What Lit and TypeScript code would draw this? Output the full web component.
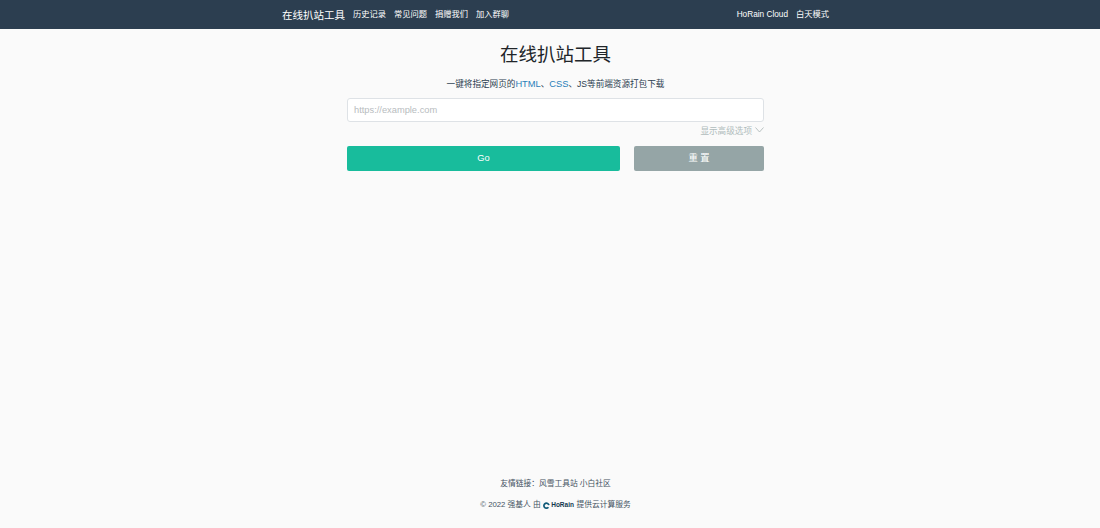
import { LitElement, html, css } from "lit";
import { customElement } from "lit/decorators.js";

@customElement("app-root")
export class AppRoot extends LitElement {
  static styles = css`
    :host {
      display: flex;
      flex-direction: column;
      height: 528px;
      overflow: hidden;
      background: #fafafa;
      color: #2c3e50;
      font-family: "Liberation Sans", "Noto Sans CJK SC", sans-serif;
      font-size: 8.6px;
    }
    a { color: inherit; text-decoration: none; }
    .nav {
      flex: none;
      height: 29px;
      background: #2c3e50;
      box-sizing: border-box;
      padding: 0 271px 0 282px;
      display: flex;
      align-items: center;
      color: #fff;
      font-size: 8.25px;
      line-height: 12px;
    }
    .brand { font-size: 10.5px; margin-right: 8px; }
    .links { display: flex; gap: 8px; flex: 1; }
    .right { display: flex; gap: 8px; }
    main {
      flex: 1;
      box-sizing: border-box;
      padding: 0 336px 0 347px;
    }
    h1 {
      margin: 12px 0 0;
      height: 28px;
      line-height: 28px;
      font-size: 18.5px;
      font-weight: 400;
      text-align: center;
      color: #212529;
    }
    .lead {
      margin: 8px 0 0;
      height: 14px;
      line-height: 14px;
      text-align: center;
    }
    .lead a { color: #2980b9; font-size: 9.3px; }
    .input {
      margin-top: 7px;
      box-sizing: border-box;
      height: 24px;
      line-height: 22px;
      padding: 0 6px;
      background: #fff;
      border: 1px solid #dee2e6;
      border-radius: 3px;
      color: #b8bcc0;
      font-size: 9.3px;
    }
    .adv {
      margin-top: 1px;
      height: 13px;
      display: flex;
      justify-content: flex-end;
      align-items: center;
      gap: 3px;
      color: #b0bcbc;
    }
    .adv svg { display: block; }
    .btns {
      display: grid;
      grid-template-columns: 273px 130px;
      justify-content: space-between;
      margin-top: 10px;
    }
    .btn {
      height: 25px;
      line-height: 25px;
      text-align: center;
      color: #fff;
      border-radius: 2px;
      font-size: 9.3px;
    }
    .go { background: #18bc9c; }
    .reset { background: #95a5a6; }
    footer {
      flex: none;
      height: 50px;
      padding-left: 11px;
      text-align: center;
      font-size: 7.75px;
      color: #44525f;
    }
    footer p { margin: 0; height: 12px; line-height: 12px; }
    footer p + p {
      margin-top: 9px;
      display: flex;
      justify-content: center;
      align-items: center;
      gap: 2.5px;
    }
    .logo {
      display: inline-flex;
      align-items: center;
      gap: 1px;
      font-size: 6.5px;
      font-weight: 700;
      color: #12384f;
    }
  `;

  render() {
    return html`
      <div class="nav">
        <a class="brand">在线扒站工具</a>
        <div class="links">
          <a>历史记录</a><a>常见问题</a><a>捐赠我们</a><a>加入群聊</a>
        </div>
        <div class="right"><a>HoRain Cloud</a><a>白天模式</a></div>
      </div>
      <main>
        <h1>在线扒站工具</h1>
        <p class="lead">一键将指定网页的<a>HTML</a>、<a>CSS</a>、JS等前端资源打包下载</p>
        <div class="input">https://example.com</div>
        <div class="adv">
          <span>显示高级选项</span>
          <svg width="9" height="6" viewBox="0 0 9 6" fill="none" stroke="#a8b4b4" stroke-width="0.8">
            <path d="M0.5 0.5 L4.5 5 L8.5 0.5" />
          </svg>
        </div>
        <div class="btns">
          <div class="btn go">Go</div>
          <div class="btn reset">重 置</div>
        </div>
      </main>
      <footer>
        <p>友情链接：<a>风雪工具站</a> <a>小白社区</a></p>
        <p>
          <span>© 2022 强基人 由</span>
          <span class="logo">
            <svg width="7" height="7" viewBox="0 0 7 7">
              <path d="M5.4 5.2 A2.5 2.5 0 1 1 5.9 3.2" fill="none" stroke="#0f5a78" stroke-width="1.7" />
            </svg>
            HoRain
          </span>
          <span>提供云计算服务</span>
        </p>
      </footer>
    `;
  }
}
